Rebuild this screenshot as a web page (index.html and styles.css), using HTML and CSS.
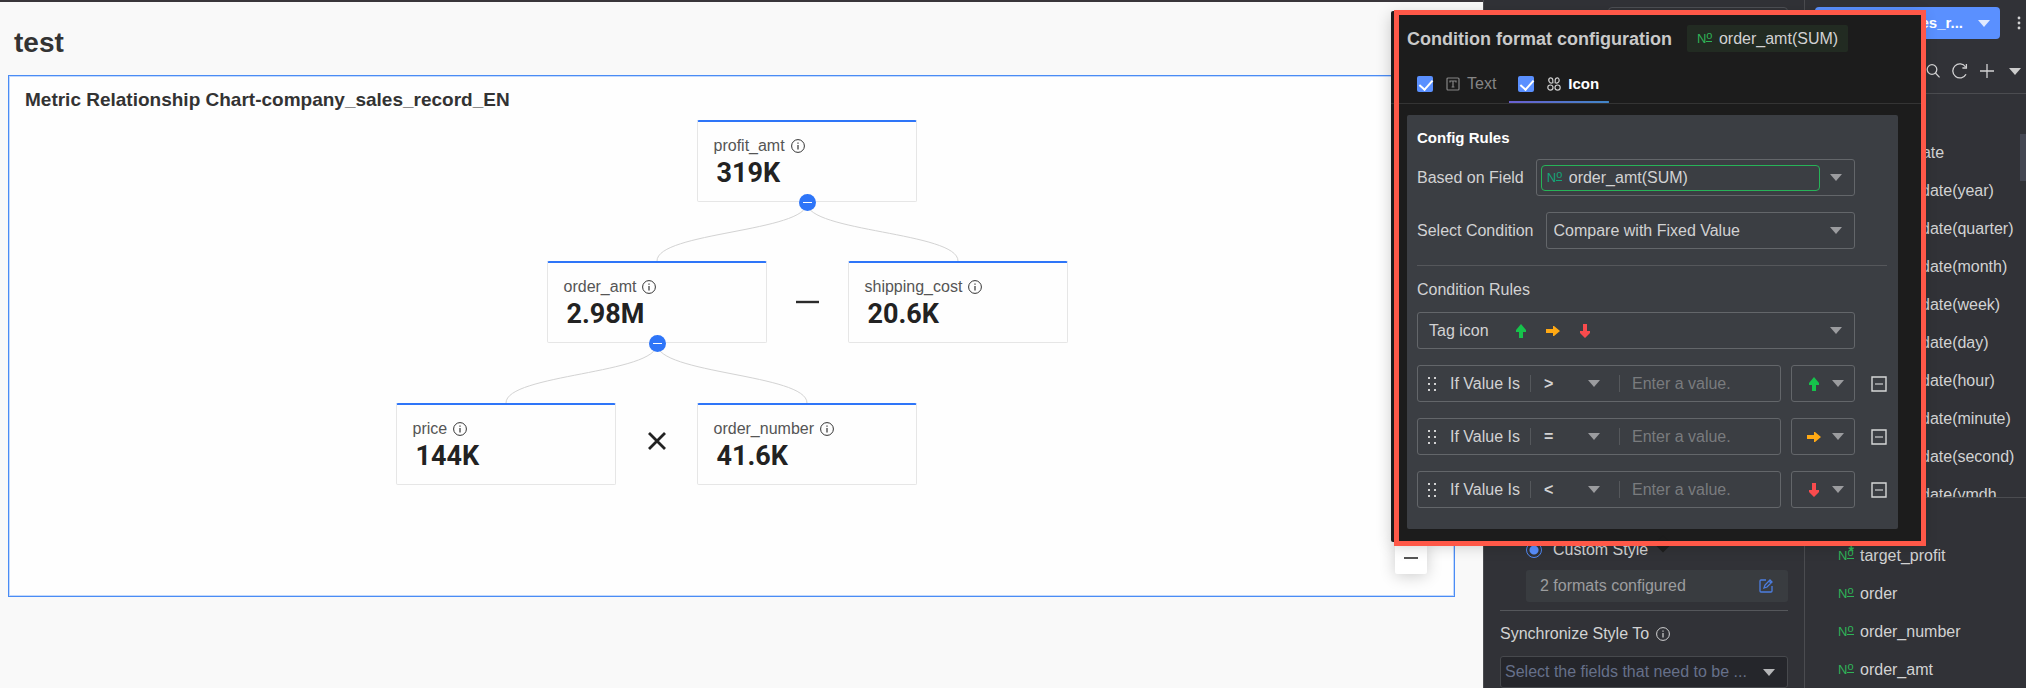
FILE: index.html
```html
<!DOCTYPE html>
<html lang="en">
<head>
  <meta charset="UTF-8">
  <title>test</title>
  <meta name="viewport" content="width=device-width, initial-scale=1.0">
  <link rel="stylesheet" href="styles.css">
</head>
<body>
  <!-- shared icons -->
  <svg class="sprite" aria-hidden="true">
    <symbol id="info" viewBox="0 0 14 14">
      <circle cx="7" cy="7" r="6.4" fill="none" stroke="currentColor"/>
      <path d="M7 6v4.4M7 3.4v1.4" fill="none" stroke="currentColor" stroke-width="1.2"/>
    </symbol>
    <symbol id="arrow-up" viewBox="0 0 14 14">
      <path d="M7 0l5 6v2H9v6H5V8H2V6z" fill="currentColor"/>
    </symbol>
    <symbol id="arrow-right" viewBox="0 0 14 14">
      <path d="M14 7L8 12H7V9H0V5h7V2h1z" fill="currentColor"/>
    </symbol>
    <symbol id="arrow-down" viewBox="0 0 14 14">
      <path d="M7 14L2 9V7h3V0h4v7h3v2z" fill="currentColor"/>
    </symbol>
    <symbol id="drag" viewBox="0 0 8 14">
      <path d="M0 0h2v2H0zM6 0h2v2H6zM0 6h2v2H0zM6 6h2v2H6zM0 12h2v2H0zM6 12h2v2H6z" fill="currentColor"/>
    </symbol>
    <symbol id="remove" viewBox="0 0 16 16">
      <path d="M1 1h14v14H1z" fill="none" stroke="#d6d7d8" stroke-width="1.4"/>
      <path d="M4 8h8" stroke="#a9abad" stroke-width="1.6"/>
    </symbol>
  </svg>

  <div class="app">
    <main class="canvas">
      <h1>test</h1>
      <section class="chart">
        <h2>Metric Relationship Chart-company_sales_record_EN</h2>
        <div class="tree">
          <svg class="links" viewBox="0 0 672 366" aria-hidden="true">
            <g fill="none" stroke="#d3d3d3">
              <path d="M411 83C411 112 261 112 261 141"/>
              <path d="M411 83C411 112 562 112 562 141"/>
              <path d="M261 224C261 254 110 254 110 283"/>
              <path d="M261 224C261 254 411 254 411 283"/>
            </g>
            <path d="M400 182h23" stroke="#2b2b2b" stroke-width="2.4"/>
            <path d="M253 313l16 16M269 313l-16 16" stroke="#222" stroke-width="2.8"/>
          </svg>
          <div class="node profit">
            <div class="name">profit_amt <svg><use href="#info"/></svg></div>
            <div class="value">319K</div>
            <button class="collapse" aria-label="Collapse"></button>
          </div>
          <div class="node amount">
            <div class="name">order_amt <svg><use href="#info"/></svg></div>
            <div class="value">2.98M</div>
            <button class="collapse" aria-label="Collapse"></button>
          </div>
          <div class="node shipping">
            <div class="name">shipping_cost <svg><use href="#info"/></svg></div>
            <div class="value">20.6K</div>
          </div>
          <div class="node price">
            <div class="name">price <svg><use href="#info"/></svg></div>
            <div class="value">144K</div>
          </div>
          <div class="node number">
            <div class="name">order_number <svg><use href="#info"/></svg></div>
            <div class="value">41.6K</div>
          </div>
        </div>
        <button class="zoom-out" aria-label="Zoom out"></button>
      </section>
    </main>

    <aside class="settings">
      <div class="settings-top"></div>
      <div class="settings-bottom">
        <label class="custom"><input type="radio" name="style" checked> Custom Style</label>
        <div class="formats">
          <span>2 formats configured</span>
          <button aria-label="Edit formats">
            <svg width="14" height="14" viewBox="0 0 14 14" fill="none" stroke="currentColor" stroke-width="1.3">
              <path d="M7 1H2Q1 1 1 2v10q0 1 1 1h10q1 0 1-1V7"/>
              <path d="M5 9l1-3 5-5 2 2-5 5zM10 2l2 2"/>
            </svg>
          </button>
        </div>
        <hr>
        <label class="sync" for="sync">Synchronize Style To <svg><use href="#info"/></svg></label>
        <div class="select sync-select">
          <select id="sync"><option>Select the fields that need to be ...</option></select>
        </div>
      </div>
    </aside>

    <aside class="data">
      <div class="source">
        <button class="source-btn"><span>sales_r...</span><i class="caret"></i></button>
        <button class="more" aria-label="More">
          <svg width="4" height="14" viewBox="0 0 4 14" fill="currentColor"><circle cx="2" cy="2" r="1.4"/><circle cx="2" cy="7" r="1.4"/><circle cx="2" cy="12" r="1.4"/></svg>
        </button>
      </div>
      <div class="tools">
        <button aria-label="Search"><svg width="14" height="14" viewBox="0 0 14 14" fill="none" stroke="currentColor" stroke-width="1.3"><circle cx="6" cy="5.5" r="4.8"/><path d="M9.4 9l4.2 4.4"/></svg></button>
        <button aria-label="Refresh"><svg width="16" height="16" viewBox="0 0 16 16" fill="none" stroke="currentColor" stroke-width="1.3"><path d="M14 11.2A7 7 0 1 1 13.6 4"/><path d="M14.4 1v4h-4"/></svg></button>
        <button aria-label="Add"><svg width="14" height="14" viewBox="0 0 14 14" fill="none" stroke="currentColor" stroke-width="1.3"><path d="M7 0v14M0 7h14"/></svg></button>
        <button aria-label="More fields"><i class="caret"></i></button>
      </div>
      <ul class="dimensions">
        <li class="parent">date</li>
        <li>date(year)</li>
        <li>date(quarter)</li>
        <li>date(month)</li>
        <li>date(week)</li>
        <li>date(day)</li>
        <li>date(hour)</li>
        <li>date(minute)</li>
        <li>date(second)</li>
        <li>date(ymdh</li>
      </ul>
      <ul class="measures">
        <li><span class="no star">N<sup>o</sup></span>target_profit</li>
        <li><span class="no">N<sup>o</sup></span>order</li>
        <li><span class="no">N<sup>o</sup></span>order_number</li>
        <li><span class="no">N<sup>o</sup></span>order_amt</li>
      </ul>
    </aside>
  </div>

  <div class="popup">
    <header>
      <h3>Condition format configuration</h3>
      <span class="tag"><span class="no">N<sup>o</sup></span>order_amt(SUM)</span>
    </header>
    <div class="tabs">
      <label class="tab">
        <input type="checkbox" checked>
        <svg width="14" height="14" viewBox="0 0 14 14" fill="none" stroke="currentColor" stroke-width="1.2"><rect x="1" y="1" width="12" height="12" rx="1"/><path d="M4 5.4V4h6v1.4M7 4v6M5.6 10h2.8"/></svg>
        Text
      </label>
      <label class="tab active">
        <input type="checkbox" checked>
        <svg width="14" height="14" viewBox="0 0 14 14" fill="none" stroke="#ccc" stroke-width="1.2"><path d="M3.4.8A2.5 2.5 0 1 0 5.8 5.8V3.2A2.4 2.4 0 0 0 3.4.8zM10.6.8A2.5 2.5 0 1 1 8.2 5.8V3.2A2.4 2.4 0 0 1 10.6.8z"/><circle cx="3.4" cy="10.6" r="2.6"/><circle cx="10.6" cy="10.6" r="2.6"/></svg>
        Icon
      </label>
    </div>
    <div class="rules">
      <h4>Config Rules</h4>
      <div class="row">
        <label for="field">Based on Field</label>
        <div class="select field">
          <div class="pill"><span class="no">N<sup>o</sup></span><select id="field"><option>order_amt(SUM)</option></select></div>
        </div>
      </div>
      <div class="row">
        <label for="condition">Select Condition</label>
        <div class="select"><select id="condition"><option>Compare with Fixed Value</option></select></div>
      </div>
      <hr>
      <h5>Condition Rules</h5>
      <button class="select tag-icon">
        Tag icon
        <svg class="up"><use href="#arrow-up"/></svg>
        <svg class="right"><use href="#arrow-right"/></svg>
        <svg class="down"><use href="#arrow-down"/></svg>
      </button>
      <div class="rule">
        <div class="test">
          <svg class="drag"><use href="#drag"/></svg>
          <label for="v1">If Value Is</label>
          <div class="select op"><select aria-label="Operator"><option>&gt;</option></select></div>
          <input id="v1" type="text" placeholder="Enter a value.">
        </div>
        <button class="select mark" aria-label="Icon"><svg class="up"><use href="#arrow-up"/></svg></button>
        <button class="remove" aria-label="Remove rule"><svg><use href="#remove"/></svg></button>
      </div>
      <div class="rule">
        <div class="test">
          <svg class="drag"><use href="#drag"/></svg>
          <label for="v2">If Value Is</label>
          <div class="select op"><select aria-label="Operator"><option>=</option></select></div>
          <input id="v2" type="text" placeholder="Enter a value.">
        </div>
        <button class="select mark" aria-label="Icon"><svg class="right"><use href="#arrow-right"/></svg></button>
        <button class="remove" aria-label="Remove rule"><svg><use href="#remove"/></svg></button>
      </div>
      <div class="rule">
        <div class="test">
          <svg class="drag"><use href="#drag"/></svg>
          <label for="v3">If Value Is</label>
          <div class="select op"><select aria-label="Operator"><option>&lt;</option></select></div>
          <input id="v3" type="text" placeholder="Enter a value.">
        </div>
        <button class="select mark" aria-label="Icon"><svg class="down"><use href="#arrow-down"/></svg></button>
        <button class="remove" aria-label="Remove rule"><svg><use href="#remove"/></svg></button>
      </div>
    </div>
  </div>
</body>
</html>
```
FILE: styles.css
```css
* {
  box-sizing: border-box;
}

body {
  margin: 0;
  font-family: "Liberation Sans", Arial, sans-serif;
  font-size: 16px;
  line-height: 20px;
  color: #d2d2d3;
  background: #313237;
  overflow: hidden;
}

h1, h2, h3, h4, h5, ul {
  margin: 0;
  padding: 0;
}

button, select, input {
  font: inherit;
  color: inherit;
  background: none;
  border: none;
  padding: 0;
  margin: 0;
  outline: none;
}

select {
  appearance: none;
  width: 100%;
}

svg {
  width: 14px;
  height: 14px;
  flex: none;
}

svg[width="4"] {
  width: 4px;
}

svg[width="16"] {
  width: 16px;
  height: 16px;
}

.sprite {
  position: absolute;
  width: 0;
  height: 0;
}

hr {
  width: 100%;
  border: none;
  border-top: 1px solid #55575b;
  margin: 0;
}

.app {
  display: flex;
  height: 100vh;
}

/* canvas */
.canvas {
  flex: 1;
  display: flex;
  flex-direction: column;
  padding: 0 28px 91px 8px;
  background: #f9f9f9;
  border-top: 2px solid #39363b;
}

.canvas h1 {
  padding: 25px 6px 16px;
  font-size: 28px;
  line-height: 32px;
  color: #333;
}

.chart {
  position: relative;
  flex: 1;
  padding: 14px 0;
  background: #fefefe;
  border: 1px solid #4a8cf5;
  box-shadow: inset 0 0 0 1px #c3d9fc;
}

.chart h2 {
  padding-left: 16px;
  font-size: 19px;
  line-height: 20px;
  color: #333;
}

/* nodes sit on a free canvas, centred in the chart */
.tree {
  position: relative;
  width: 672px;
  height: 366px;
  margin: 10px auto 0;
}

.links {
  position: absolute;
  top: 0;
  left: 0;
  width: 672px;
  height: 366px;
}

.node {
  position: absolute;
  width: 220px;
  height: 82px;
  padding: 14px 16px;
  border: 1px solid #e6e6e6;
  border-top: 2px solid #2e75f8;
  border-radius: 2px;
  background: #fefefe;
}

.profit { left: 301px; top: 0; }
.amount { left: 151px; top: 141px; }
.shipping { left: 452px; top: 141px; }
.price { left: 0; top: 283px; }
.number { left: 301px; top: 283px; }

.name {
  display: flex;
  align-items: center;
  gap: 6px;
  color: #555;
  line-height: 20px;
}

.name svg {
  color: #333;
}

.value {
  padding-left: 3px;
  font-family: Roboto, sans-serif;
  font-size: 27px;
  font-weight: 700;
  line-height: 34px;
  color: #222;
}

.collapse {
  position: absolute;
  left: 101px;
  bottom: -10px;
  width: 17px;
  height: 17px;
  border-radius: 50%;
  background: linear-gradient(#fff, #fff) center / 9px 1px no-repeat #2e75f8;
}

.zoom-out {
  position: absolute;
  right: 27px;
  bottom: 22px;
  width: 32px;
  height: 32px;
  border-radius: 2px;
  background: linear-gradient(#555, #555) center / 14px 2px no-repeat #fff;
  box-shadow: 0 2px 16px rgba(0, 0, 0, 0.2);
}

/* settings panel */
.settings {
  display: flex;
  flex-direction: column;
  justify-content: space-between;
  width: 321px;
  padding: 7px 16px 0;
  border-left: 1px solid #4b4c50;
}

.settings-top {
  height: 32px;
  margin-left: 108px;
  border: 1px solid #4d4f54;
  border-radius: 4px;
}

.settings-bottom {
  display: flex;
  flex-direction: column;
}

.custom {
  display: flex;
  align-items: center;
  gap: 11px;
  margin: 0 0 10px 26px;
}

.custom input {
  appearance: none;
  width: 16px;
  height: 16px;
  border: 1px solid #5189f5;
  border-radius: 50%;
  background: radial-gradient(circle, #5a90ff 4px, transparent 5px);
}

.formats {
  display: flex;
  align-items: center;
  justify-content: space-between;
  height: 32px;
  margin: 0 0 8px 26px;
  padding: 0 15px 0 14px;
  border-radius: 3px;
  background: #393c40;
  color: #9c9d9f;
}

.formats button {
  display: flex;
  color: #4c7de0;
}

.sync {
  display: flex;
  align-items: center;
  gap: 7px;
  margin: 13px 0 12px;
}

/* drop-downs */
.select {
  position: relative;
  display: flex;
  align-items: center;
  flex: 1;
  height: 37px;
  padding: 0 32px 0 7px;
  border: 1px solid #63666a;
  border-radius: 3px;
}

.select::after,
.caret {
  content: "";
  border: 6px solid transparent;
  border-top: 7px solid #9b9c9f;
  border-bottom: 0;
}

.select::after {
  position: absolute;
  right: 12px;
  pointer-events: none;
}

.sync-select {
  flex: none;
  height: 32px;
  padding-left: 4px;
  background: #25262b;
  border-color: #47494d;
  color: #66708a;
}

.sync-select::after {
  border-top-color: #b5b6b8;
}

/* data panel */
.data {
  display: flex;
  flex-direction: column;
  width: 222px;
  border-left: 1px solid #4b4c50;
}

.source {
  display: flex;
  align-items: center;
  gap: 17px;
  padding: 7px 5px 0 10px;
}

.source-btn {
  display: flex;
  align-items: center;
  justify-content: flex-end;
  flex: 1;
  gap: 15px;
  height: 32px;
  padding-right: 10px;
  border-radius: 4px;
  background: #5a90ff;
  color: #fff;
  font-size: 15px;
  font-weight: 700;
}

.source-btn .caret {
  border-top-color: #dfe9ff;
}

.more, .tools button {
  display: flex;
}

.tools {
  display: flex;
  align-items: center;
  justify-content: flex-end;
  gap: 12px;
  height: 55px;
  padding: 10px 5px 0 0;
  border-bottom: 1px solid #4b4c50;
}

.tools button:last-child {
  margin-left: 3px;
}

.tools .caret {
  border-top-color: #ccc;
}

.dimensions {
  flex: 1;
  overflow: hidden;
  padding: 40px 0 0 116px;
  background: linear-gradient(#444753, #444753) right 40px / 6px 47px no-repeat;
  border-bottom: 1px solid #4b4c50;
  list-style: none;
}

.dimensions li, .measures li {
  height: 38px;
  line-height: 38px;
}

.dimensions .parent {
  margin-left: -8px;
}

.measures {
  height: 190px;
  padding: 39px 0 0 33px;
  list-style: none;
}

.measures li {
  display: flex;
  align-items: center;
  gap: 6px;
}

.no {
  position: relative;
  display: flex;
  align-items: flex-start;
  flex: none;
  width: 16px;
  font-size: 13px;
  line-height: 14px;
  color: #2fb457;
}

.no sup {
  height: 10px;
  border-bottom: 1px solid;
  font-size: 11px;
  line-height: 7px;
}

.star::after {
  content: "*";
  position: absolute;
  top: -5px;
  right: 0;
  font-size: 14px;
  font-weight: 700;
}

/* condition format popup */
.popup {
  position: absolute;
  top: 11px;
  right: 104px;
  width: 531px;
  padding-bottom: 13px;
  border-radius: 2px;
  background: #1c1c1c;
  box-shadow: 0 4px 16px rgba(0, 0, 0, 0.2);
}

.popup::before {
  content: "";
  position: absolute;
  left: 50%;
  bottom: -8px;
  width: 12px;
  height: 12px;
  background: #1c1c1c;
  transform: rotate(45deg);
}

/* highlight frame */
.popup::after {
  content: "";
  position: absolute;
  top: -1px;
  right: -4px;
  bottom: -4px;
  left: 3px;
  border: 5px solid #ff5848;
  pointer-events: none;
}

.popup header {
  display: flex;
  align-items: center;
  gap: 15px;
  padding: 14px 16px 0;
}

.popup h3 {
  font-size: 18px;
  color: #c9c9c9;
}

.tag {
  display: flex;
  align-items: center;
  gap: 6px;
  height: 27px;
  padding: 0 10px;
  border-radius: 2px;
  background: #222b22;
}

.tabs {
  display: flex;
  padding-left: 17px;
  margin-bottom: 11px;
  border-bottom: 1px solid #343434;
}

.tab {
  display: flex;
  align-items: center;
  gap: 7px;
  height: 51px;
  margin-right: 3px;
  padding: 12px 10px 0 9px;
  color: #858585;
}

.tab input {
  appearance: none;
  width: 16px;
  height: 16px;
  margin-right: 6px;
  border-radius: 2px;
  background: #5a90ff;
}

.tab input::after {
  content: "";
  display: block;
  width: 6px;
  height: 11px;
  margin: 1px 0 0 5px;
  border: solid #fff;
  border-width: 0 2px 2px 0;
  transform: rotate(42deg);
}

.tab.active {
  color: #fff;
  font-size: 15px;
  font-weight: 700;
  background: linear-gradient(90deg, #6a5fd0, #4186c8) bottom / 100% 2px no-repeat;
}

.rules {
  display: flex;
  flex-direction: column;
  margin: 0 24px 0 16px;
  padding: 13px 43px 21px 10px;
  border-radius: 2px;
  background: #3b3e43;
}

.rules h4 {
  margin-bottom: 11px;
  font-size: 15px;
  color: #fff;
}

.row {
  display: flex;
  align-items: center;
  gap: 12px;
  margin-bottom: 16px;
}

.field {
  padding: 0 34px 0 4px;
}

.pill {
  display: flex;
  align-items: center;
  flex: 1;
  gap: 6px;
  height: 26px;
  padding: 0 5px;
  border: 1px solid #27b358;
  border-radius: 4px;
}

.pill .no {
  color: #14a578;
}

.rules hr {
  width: auto;
  margin-right: -32px;
}

.rules h5 {
  margin: 14px 0 12px;
  font-size: 16px;
  font-weight: 400;
}

.tag-icon {
  flex: none;
  gap: 18px;
  padding-left: 11px;
}

.tag-icon .up {
  margin-left: 7px;
}

.up { color: #16c24b; }
.right { color: #ffa914; }
.down { color: #f94b4d; }

.rule {
  display: flex;
  align-items: center;
  gap: 10px;
  margin: 16px -32px 0 0;
}

.test {
  display: flex;
  align-items: center;
  flex: 1;
  min-width: 0;
  height: 37px;
  padding-left: 10px;
  border: 1px solid #63666a;
  border-radius: 3px;
}

.test label {
  margin: 0 10px 0 14px;
  white-space: nowrap;
}

.drag {
  width: 8px;
}

.op {
  flex: none;
  width: 90px;
  height: 17px;
  padding: 0 0 0 13px;
  border-width: 0 1px;
  border-color: #55585c;
  border-radius: 0;
}

.op select {
  font-weight: 700;
}

.op::after {
  right: 19px;
}

.test input {
  flex: 1;
  width: 0;
  min-width: 0;
  padding-left: 12px;
}

.test input::placeholder {
  color: #797b7e;
}

.mark {
  flex: none;
  width: 64px;
  padding: 0 0 0 15px;
}

.mark::after {
  right: 10px;
}

.remove {
  display: flex;
  margin-left: 6px;
}

.remove svg {
  width: 16px;
  height: 16px;
}
```
